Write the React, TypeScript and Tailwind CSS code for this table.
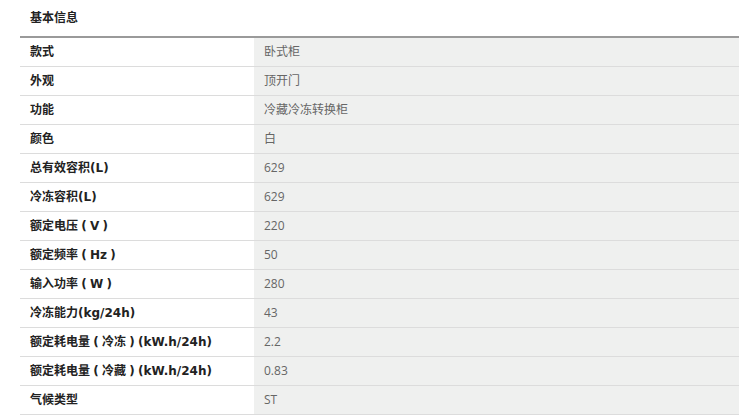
const specs: [string, string][] = [
  ['款式', '卧式柜'],
  ['外观', '顶开门'],
  ['功能', '冷藏冷冻转换柜'],
  ['颜色', '白'],
  ['总有效容积(L)', '629'],
  ['冷冻容积(L)', '629'],
  ['额定电压（V）', '220'],
  ['额定频率（Hz）', '50'],
  ['输入功率（W）', '280'],
  ['冷冻能力(kg/24h)', '43'],
  ['额定耗电量（冷冻）(kW.h/24h)', '2.2'],
  ['额定耗电量（冷藏）(kW.h/24h)', '0.83'],
  ['气候类型', 'ST'],
];

// full-width parens in the source are drawn centred in their cell
const Label = ({ text }: { text: string }) => (
  <>
    {text.split(/([（）])/).map((part, i) =>
      part === '（' || part === '）' ? (
        <span key={i} className="inline-block w-[12px] text-center">
          {part === '（' ? '(' : ')'}
        </span>
      ) : (
        <span key={i}>{part}</span>
      )
    )}
  </>
);

export default function App() {
  return (
    <div className="w-[739px] h-[415px] overflow-hidden bg-white pl-[20px] font-['Open_Sans','Noto_Sans_CJK_SC',sans-serif] text-[12px]">
      <div className="h-[36px] flex items-center pl-[10px] pb-[2px] font-bold text-[#222] font-['Noto_Sans_CJK_SC',sans-serif]">
        基本信息
      </div>
      <div className="border-t-2 border-[#9a9a9a]">
        {specs.map(([label, value]) => (
          <div key={label} className="flex h-[29px] border-b border-[#dcdcdc]">
            <div className="w-[234px] flex items-center pl-[10px] font-bold text-[#222] font-['DejaVu_Sans','Noto_Sans_CJK_SC',sans-serif] whitespace-pre">
              <Label text={label} />
            </div>
            <div className="flex-1 flex items-center pl-[10px] bg-[#eff0ef] text-[#666]">{value}</div>
          </div>
        ))}
      </div>
    </div>
  );
}
